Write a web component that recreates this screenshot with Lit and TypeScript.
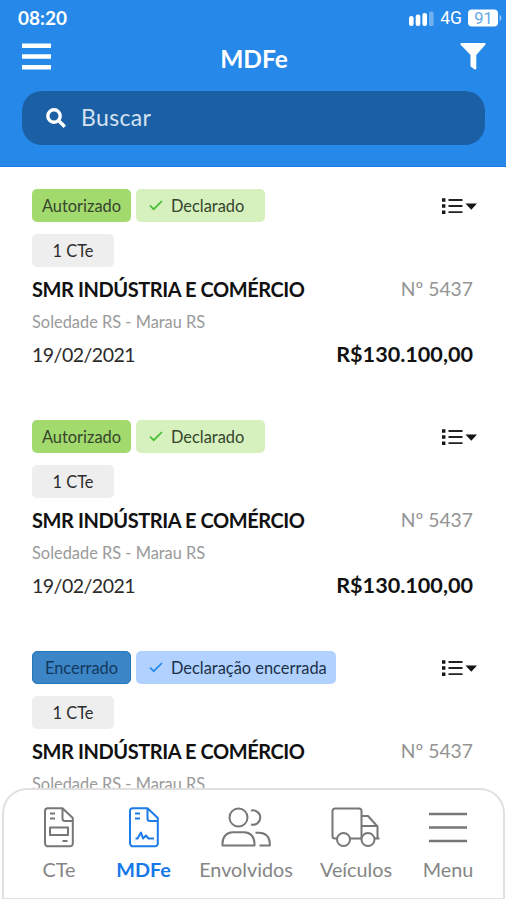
import { LitElement, html, css, svg } from "lit";
import { customElement, property } from "lit/decorators.js";

const textStyles = css`
  .t { display: block; white-space: nowrap; overflow: visible; }
`;

interface Doc { kind: "ok" | "closed"; status: string; note: string; }

const docs: Doc[] = [
  { kind: "ok", status: "Autorizado", note: "Declarado" },
  { kind: "ok", status: "Autorizado", note: "Declarado" },
  { kind: "closed", status: "Encerrado", note: "Declaração encerrada" },
];

@customElement("doc-card")
class DocCard extends LitElement {
  @property({ attribute: false }) doc!: Doc;
  static styles = [textStyles, css`
    :host { display: block; height: 231px; padding: 0 33px 0 32px; box-sizing: border-box; }
    .row { display: flex; justify-content: space-between; align-items: center; }
    .tags { display: flex; gap: 5px; }
    .tag { height: 33px; padding-top: 1px; border-radius: 5px; box-sizing: border-box; display: flex; align-items: center; font-size: 16.4px; color: #35452c; white-space: nowrap; }
    .status { width: 99px; justify-content: center; }
    .note { width: 129px; padding-left: 13px; gap: 8px; }
    .ok .status { background: #a3da6e; }
    .ok .note { background: #d6f0be; }
    .closed .status { background: #3c85c6; border: 1px solid #2377bc; padding-top: 0; color: #12385c; }
    .closed .note { background: #b1d2fe; width: 200px; color: #1c3048; }
    .check { width: 14px; height: 12px; fill: none; stroke: #45bd32; stroke-width: 1.7; }
    .closed .check { stroke: #2189ec; }
    .list { width: 36px; height: 20px; margin-right: -4px; }
    .count { width: 82px; background: #eee; justify-content: center; margin-top: 12px; color: #2c2c2c; }
    .name-row { margin-top: 8px; height: 28px; }
    .name { font-size: 20px; letter-spacing: -0.42px; font-weight: 700; color: #111; }
    .number { font-size: 19.3px; color: #949494; }
    .route { font-size: 16.4px; color: #9a9a9a; height: 24px; line-height: 24px; margin-top: 7px; }
    .total-row { margin-top: 7px; height: 28px; }
    .date { font-size: 19.5px; letter-spacing: -0.5px; color: #2a2a2a; }
    .price { font-size: 21.6px; font-weight: 700; color: #111; }
  `];
  render() {
    return html`<div class=${this.doc.kind}>
      <div class="row">
        <div class="tags">
          <div class="tag status"><span class="t">${this.doc.status}</span></div>
          <div class="tag note">
            <svg class="check" viewBox="0 0 14 12"><path d="M1 5.500 4.700 9.200 13 1" /></svg>
            <span class="t">${this.doc.note}</span>
          </div>
        </div>
        <svg class="list" viewBox="0 0 36 20">
          <path d="M1 2.300h3.400v3.400H1zM1 8.300h3.400v3.400H1zM1 14.500h3.400v3.400H1zM24.500 7.500h11.500l-5.700 6.300z" fill="#151515" />
          <path d="M7.500 4h14M7.500 10h14M7.500 16.200h14" stroke="#222" stroke-width="1.800" />
        </svg>
      </div>
      <div class="tag count"><span class="t">1 CTe</span></div>
      <div class="row name-row"><span class="t name">SMR INDÚSTRIA E COMÉRCIO</span><span class="t number">Nº 5437</span></div>
      <div class="route"><span class="t">Soledade RS - Marau RS</span></div>
      <div class="row total-row"><span class="t date">19/02/2021</span><span class="t price">R$130.100,00</span></div>
    </div>`;
  }
}

const page = svg`<path d="M4.200 1.200H19.500L29.800 11V36.500A2.800 2.800 0 0 1 27 39.300H5A3 3 0 0 1 2 36.300V4A2.800 2.800 0 0 1 4.800 1.200zM19.500 1.200V11.500A2.500 2.500 0 0 0 22 14H29.800M7 6.500H12M7 11.500H12" />`;

const tabs = [
  { label: "CTe", cls: "cte", w: 32, h: 40, art: svg`${page}<path d="M7 20.500H25V28H7zM19.500 34H24.500" />` },
  { label: "MDFe", cls: "mdfe", w: 32, h: 40, art: svg`${page}<path d="M7.500 31.500H9.500L13 25.500 15 31.500 18 28.500 20.500 31.500H26" />` },
  { label: "Envolvidos", cls: "people", w: 50, h: 40, art: svg`<path d="M1.500 38.500H33.500V36.500C33.500 29.500 29 25.300 23 25.300H12C6 25.300 1.500 29.500 1.500 36.500z" /><circle cx="17.500" cy="10.500" r="9" /><path d="M30 3.700A7.200 7.200 0 1 1 30 17.500M34.500 25.700H38C44.500 25.700 48.800 30 48.800 36.500V38.500H38.500" />` },
  { label: "Veículos", cls: "truck", w: 50, h: 40, art: svg`<path d="M6 31.500H4A2.500 2.500 0 0 1 1.500 29V4A2.500 2.500 0 0 1 4 1.500H28A2.500 2.500 0 0 1 30.500 4V31.500M19 31.500H30M31 9H37L46.500 19.500V31.500H43.500M31 19H46M46.500 31.500H48.500" /><circle cx="12.500" cy="32.500" r="6.500" /><circle cx="37" cy="32.500" r="6.500" />` },
  { label: "Menu", cls: "menu", w: 40, h: 40, art: svg`<path d="M1 7H39M1 20.500H39M1 34H39" stroke-width="2.500" />` },
];

@customElement("app-root")
class AppRoot extends LitElement {
  static styles = [textStyles, css`
    :host { display: block; width: 506px; height: 900px; position: relative; overflow: hidden; background: #fff; font-family: Lato, "Open Sans", sans-serif; line-height: 1.2; }
    header { height: 166.5px; background: #2688e8; box-sizing: border-box; color: #fff; border-bottom: 1px solid #147ce4; display: flex; flex-direction: column; }
    .statusbar { height: 36px; padding: 0 4px 0 18px; display: flex; align-items: center; justify-content: space-between; box-sizing: border-box; }
    .time { font-size: 19px; font-weight: 700; }
    .signals { display: flex; align-items: center; padding-bottom: 1px; }
    .bars { width: 26px; height: 16px; }
    .network { font: 17.5px Roboto, "Liberation Sans", sans-serif; margin-left: 5px; }
    .battery { width: 34px; height: 20px; margin-left: 6px; }
    .heading { height: 43px; display: grid; grid-template-columns: 29px 1fr 29px; align-items: center; padding: 0 20px 0 22px; }
    .burger { width: 29px; height: 27px; margin-bottom: 3px; }
    .title { font-size: 24.5px; font-weight: 700; text-align: center; padding-top: 2px; }
    .filter { width: 26px; height: 27px; margin: 0 0 2px 3px; }
    .search { margin: 12px 21px 0 22px; height: 54px; border-radius: 20px; background: #1b60a4; display: flex; align-items: center; padding-left: 24px; gap: 15px; box-sizing: border-box; }
    .glass { width: 20px; height: 20px; fill: none; stroke: #fff; stroke-width: 3.400; }
    .placeholder { font-size: 23px; letter-spacing: .35px; color: #d4e2f2; }
    main { padding-top: 22.500px; }
    nav { position: absolute; left: 2px; right: 1px; top: 788px; height: 111px; box-sizing: border-box; border: 2px solid #e0e0e0; border-bottom-width: 1px; border-radius: 25px 25px 0 0; background: #fff; padding: 17px 0 0 38px; display: flex; align-items: flex-start; }
    .tab { display: flex; flex-direction: column; align-items: center; color: #858585; flex: none; }
    .tab svg { fill: none; stroke: #777; stroke-width: 2; stroke-linejoin: round; overflow: visible; }
    .label { font-size: 19.800px; margin-top: 11px; }
    .cte { width: 34px; }
    .mdfe { width: 55px; margin-left: 40px; }
    .people { width: 94px; margin-left: 28px; }
    .truck { width: 72px; margin-left: 27px; }
    .menu { width: 50px; margin-left: 31px; }
    .tab.mdfe { color: #1478e8; font-weight: 700; }
    .tab.mdfe svg { stroke: #1c7ce8; }
  `];
  render() {
    return html`
      <header>
        <div class="statusbar">
          <span class="t time">08:20</span>
          <div class="signals">
            <svg class="bars" viewBox="0 0 26 16" fill="#fff"><rect y="6" width="4.600" height="10" rx="2.200" /><rect x="6.700" y="4.500" width="4.600" height="11.500" rx="2" /><rect x="13.400" y="3" width="4.600" height="13" rx="2" /><rect x="20" y="1.500" width="4.600" height="14.500" rx="1.500" opacity=".35" /></svg>
            <span class="t network">4G</span>
            <svg class="battery" viewBox="0 0 34 20"><rect y="1.500" width="30" height="17" rx="4" fill="#fff" /><path d="M31.500 6.500q4 3.500 0 7z" fill="#9ac8f7" /><text x="15.500" y="16" text-anchor="middle" font-family="Roboto" font-size="16.500" fill="#65a8e8">91</text></svg>
          </div>
        </div>
        <div class="heading">
          <svg class="burger" viewBox="0 0 29 27"><path d="M0 2.800h29M0 13.500h29M0 24.200h29" stroke="#fff" stroke-width="4.600" /></svg>
          <span class="t title">MDFe</span>
          <svg class="filter" viewBox="0 0 26 27"><path d="M1.200 0H24.800q1.400.5.5 1.800L16.300 12V25.500q-.5 1.500-2 .8L10.500 23.200V12L.7 1.800Q-.2.5 1.200 0z" fill="#fff" /></svg>
        </div>
        <div class="search">
          <svg class="glass" viewBox="0 0 20 20"><circle cx="8" cy="8" r="6.200" /><path d="M12.500 12.500 18.800 18.800" /></svg>
          <span class="t placeholder">Buscar</span>
        </div>
      </header>
      <main>${docs.map(d => html`<doc-card .doc=${d}></doc-card>`)}</main>
      <nav>${tabs.map(t => html`<div class="tab ${t.cls}"><svg width=${t.w} height=${t.h} viewBox="0 0 ${t.w} ${t.h}">${t.art}</svg><span class="t label">${t.label}</span></div>`)}</nav>
    `;
  }
}
